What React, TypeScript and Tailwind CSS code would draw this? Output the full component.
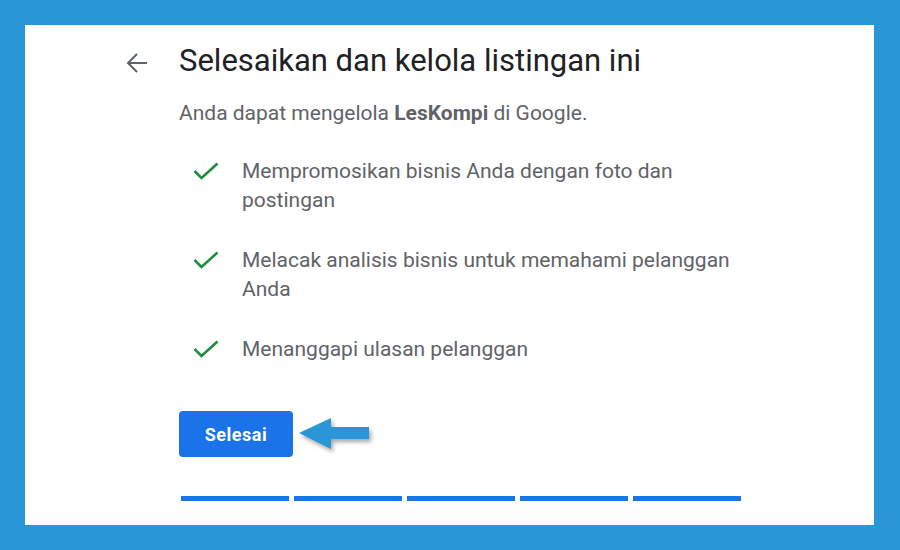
import React from "react";

const items = [
  "Mempromosikan bisnis Anda dengan foto dan postingan",
  "Melacak analisis bisnis untuk memahami pelanggan Anda",
  "Menanggapi ulasan pelanggan",
];

function CheckIcon() {
  return (
    <svg width="26" height="18" viewBox="0 0 26 18" fill="none" className="shrink-0">
      <polyline points="1.5,9 8.5,16 24.5,1.5" stroke="#1e8e3e" strokeWidth="2.6" />
    </svg>
  );
}

function BackArrow() {
  return (
    <svg width="22" height="22" viewBox="0 0 22 22" fill="none">
      <path d="M21 11H2.5M11 2L2 11l9 9" stroke="#5f6368" strokeWidth="2" />
    </svg>
  );
}

function PointerArrow() {
  return (
    <svg
      width="78"
      height="40"
      viewBox="0 0 78 40"
      className="drop-shadow-[2px_3px_2px_rgba(0,0,0,0.35)]"
    >
      <path d="M3 19L35 4V13H73V25H35V35Z" fill="#2996d8" />
    </svg>
  );
}

export default function App() {
  return (
    <div className="w-[900px] h-[550px] bg-[#2996d8] pt-[25px] pl-[25px] pr-[26px] pb-[25px] font-['Roboto',sans-serif]">
      <div className="h-full bg-white flex pl-[101px] pt-[18px]">
        <div className="w-[53px] pt-[9px]">
          <BackArrow />
        </div>
        <div className="w-[562px] flex flex-col">
          <h1 className="text-[31px] leading-[36px] text-[#202124] font-normal">
            Selesaikan dan kelola listingan ini
          </h1>
          <p className="mt-[20px] text-[21px] leading-[28px] text-[#5f6368]">
            Anda dapat mengelola <span className="font-bold">LesKompi</span> di Google.
          </p>
          <ul className="mt-[30px] flex flex-col gap-[31px]">
            {items.map((t) => (
              <li key={t} className="flex">
                <div className="w-[63px] pl-[14px] pt-[5px]">
                  <CheckIcon />
                </div>
                <span className="w-[499px] text-[21px] leading-[29px] text-[#5f6368]">{t}</span>
              </li>
            ))}
          </ul>
          <div className="mt-[47px] flex items-center gap-[3px]">
            <button className="w-[114px] h-[46px] rounded-[4px] bg-[#1a73e8] text-white text-[18px] font-bold tracking-[0.5px]">
              Selesai
            </button>
            <PointerArrow />
          </div>
          <div className="mt-[39px] ml-[2px] flex gap-[5px]">
            {[0, 1, 2, 3, 4].map((i) => (
              <div key={i} className="w-[108px] h-[5px] bg-[#1a73e8]" />
            ))}
          </div>
        </div>
      </div>
    </div>
  );
}
